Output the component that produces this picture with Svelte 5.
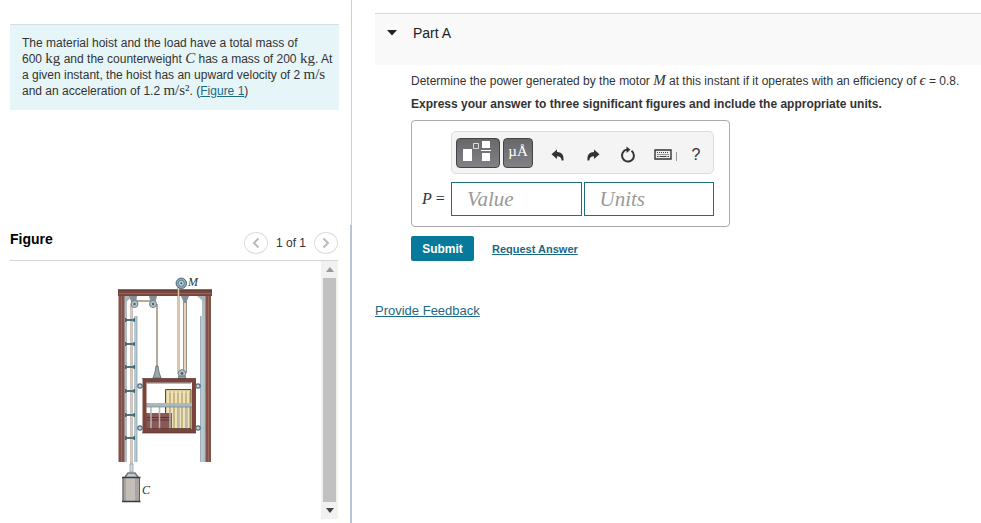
<script>
    let open = $state(true)
    let value = $state('')
    let units = $state('')

    const brackets = [320, 344, 367, 391, 415, 438]
    const rollers = [[140, 386], [198, 386], [140, 428], [198, 428]]
    const slats = [168, 172, 176, 180, 184, 188]
</script>

<div class="page">
    <aside>
        <div class="upper">
            <p class="problem">
                The material hoist and the load have a total mass of 600&nbsp;<span class="math">kg</span> and the counterweight <i class="math">C</i> has a mass of 200&nbsp;<span class="math">kg</span>. At a given instant, the hoist has an upward velocity of 2&nbsp;<span class="math">m/s</span> and an acceleration of 1.2&nbsp;<span class="math">m/s²</span>. (<a href="#figure">Figure 1</a>)
            </p>
        </div>
        <section class="lower" id="figure">
            <header>
                <h2>Figure</h2>
                <nav>
                    <button class="round" aria-label="Previous figure">
                        <svg width="8" height="12" viewBox="0 0 8 12"><path d="M6.5 1.5 2 6l4.5 4.5" /></svg>
                    </button>
                    <span>1 of 1</span>
                    <button class="round" aria-label="Next figure">
                        <svg width="8" height="12" viewBox="0 0 8 12"><path d="M1.5 1.5 6 6l-4.5 4.5" /></svg>
                    </button>
                </nav>
            </header>
            <div class="viewer">
                <svg class="hoist" width="110" height="240" viewBox="110 270 110 240" role="img" aria-label="Material hoist with motor M and counterweight C">
                    <!-- frame -->
                    <path d="M124 295h3v167h-3zM202 295h4v167h-4z" fill="#b3bcc2" />
                    <path d="M118.5 294h6v168h-6zM205.5 294h5.5v168h-5.5z" fill="#81514a" />
                    <path d="M121.5 296v166M208.5 296v166" stroke="#96695f" />
                    <path d="M118 289.5h94v6.5h-94z" fill="#7b463d" />
                    <path d="M118 290h94" stroke="#543630" />
                    <path d="M119 293.5h92" stroke="#986557" />
                    <path d="M125 296h8l-8 7zM205 296h-8l8 7z" fill="#a8b5bb" />
                    <!-- guide rails -->
                    <path d="M134 316h3v146h-3zM200.5 316h3v146h-3z" fill="#b4c9d2" />
                    <path d="M137 316v146M200.5 316v146" stroke="#879aa4" stroke-width=".7" />
                    <!-- ropes -->
                    <path d="M131.5 466V304M134 301h19M157 304v65M178.5 285v89" fill="none" stroke="#9b8777" stroke-width="2" />
                    <path d="M131.5 466V304M134 301h19M157 304v65M178.5 285v89" fill="none" stroke="#dccab0" />
                    <path d="M185 299v74" stroke="#8b7869" stroke-width="3.6" />
                    <path d="M185 299v74" stroke="#eadfcc" stroke-width="1.8" />
                    {#each brackets as y}
                        <rect x="125" y={y - 1} width="10" height="2" fill="#4b7585" />
                        <rect x="125" y={y - 2} width="1.5" height="4" fill="#3f6573" />
                        <rect x="133.5" y={y - 2} width="1.5" height="4" fill="#3f6573" />
                    {/each}
                    <!-- pulleys -->
                    <path d="M129 296h8l-1 8h-4zM149 296h8l-2 8h-4zM181 296h8l-3 7h-2z" fill="#829097" />
                    <g fill="#b5c1c5" stroke="#71828a">
                        <circle cx="134.5" cy="304" r="3.5" />
                        <circle cx="153" cy="304" r="3.5" />
                        <circle cx="182" cy="373.5" r="3.8" />
                    </g>
                    <g fill="#4e626c">
                        <circle cx="134.5" cy="304" r="1.2" />
                        <circle cx="153" cy="304" r="1.2" />
                        <circle cx="182" cy="373.5" r="1.4" />
                    </g>
                    <circle cx="181.3" cy="283.3" r="5.2" fill="#8fafc0" stroke="#476477" />
                    <circle cx="181.3" cy="283.3" r="3" fill="#c5d6df" stroke="#587c90" />
                    <circle cx="181.3" cy="283.3" r="1" fill="#344b58" />
                    <path d="M156 366h2l1 6 2 6h-8l2-6zM179 376l-1 3h8l-1-3z" fill="#9aa7ac" stroke="#59676d" stroke-width=".8" />
                    <!-- load -->
                    <path d="M165.5 389.5H191V429h-25.5z" fill="#d9c994" stroke="#5c4b36" />
                    {#each slats as x}
                        <path d="M{x} 391v37" stroke="#f4eac3" stroke-width="1.5" />
                        <path d="M{x + 2} 393v35" stroke="#a18d5e" stroke-width=".6" />
                    {/each}
                    <path d="M146 413h26v16h-26z" fill="#8c5856" />
                    <path d="M147 417.5h24M147 420h24" stroke="#463139" stroke-width=".9" />
                    <path d="M151 406v23M159.5 406v23M170 406v23M179 406v23M187 406v23" stroke="#b7b8b5" stroke-width="1.5" />
                    <path d="M146 403h46v4h-46z" fill="#abb8bc" />
                    <path d="M146 407h46" stroke="#68777e" stroke-width=".6" />
                    <!-- cage -->
                    <path d="M144.5 380.5H194V431h-49.5z" fill="none" stroke="#7a443c" stroke-width="4" />
                    <path d="M142 378.5h54M142 433h54M147 383h44M147 428.5h44" stroke="#513630" stroke-width=".7" />
                    {#each rollers as [cx, cy]}
                        <circle {cx} {cy} r="2.2" fill="#c5d5dc" stroke="#526c78" stroke-width="1.2" />
                    {/each}
                    <!-- counterweight -->
                    <path d="M130 464h3v8h-3z" fill="#d7dddf" stroke="#76858b" stroke-width=".6" />
                    <path d="M125 477l3-4h7l3 4" fill="#c3cacc" stroke="#6d777b" stroke-width="1.5" />
                    <path d="M122.5 477H140v25h-17.5z" fill="#aaa5a1" />
                    <path d="M126 478h9v23h-9z" fill="#c4beb9" />
                    <path d="M123 477v25M139.5 477v25" stroke="#5e5d5d" />
                    <path d="M122 477.5h18.5M122 501.5h18.5" stroke="#393a3b" stroke-width="1.6" />
                    <text x="188" y="286">M</text>
                    <text x="142" y="494">C</text>
                </svg>
                <div class="scrollbar">
                    <button aria-label="Scroll up"><svg width="8" height="5" viewBox="0 0 8 5"><path d="M0 5l4-5 4 5z" fill="#999" /></svg></button>
                    <div class="thumb"></div>
                    <button aria-label="Scroll down"><svg width="8" height="5" viewBox="0 0 8 5"><path d="M0 0l4 5 4-5z" fill="#444" /></svg></button>
                </div>
            </div>
        </section>
    </aside>

    <main>
        <div class="part">
            <button aria-expanded={open} onclick={() => (open = !open)}>
                <svg width="10" height="6" viewBox="0 0 10 6"><path d="M0 0h10L5 5.5z" fill="#222" /></svg>
                <span>Part A</span>
            </button>
        </div>
        {#if open}
            <div class="body">
                <p>Determine the power generated by the motor <i class="math">M</i> at this instant if it operates with an efficiency of <i class="math">ϵ</i> = 0.8.</p>
                <p><b>Express your answer to three significant figures and include the appropriate units.</b></p>
                <form onsubmit={(e) => e.preventDefault()}>
                    <div class="answer">
                        <div class="toolbar">
                            <button type="button" class="dark wide" aria-label="Templates">
                                <svg width="42" height="28" viewBox="0 0 42 28">
                                    <path d="M6 10h9v12H6zM25 2h8v7h-8zM25 14h8v8h-8zM24 11h10v1H24z" fill="#fff" />
                                    <path d="M16.5 4.5h5v5h-5z" fill="none" stroke="#ddd" />
                                </svg>
                            </button>
                            <button type="button" class="dark" aria-label="Symbols">µÅ</button>
                            <button type="button" class="tool" aria-label="Undo">
                                <svg width="14" height="14" viewBox="0 0 14 14"><path d="M.5 6.3 6 1.5v2.6c4.5.1 7 2.5 6.5 8.4h-1.8C10.3 9.3 8.8 8.2 6 8.2v2.9z" fill="#333" /></svg>
                            </button>
                            <button type="button" class="tool" aria-label="Redo">
                                <svg width="14" height="14" viewBox="0 0 14 14"><path d="M13.5 6.3 8 1.5v2.6c-4.5.1-7 2.5-6.5 8.4h1.8C3.7 9.3 5.2 8.2 8 8.2v2.9z" fill="#333" /></svg>
                            </button>
                            <button type="button" class="tool" aria-label="Reset">
                                <svg width="16" height="18" viewBox="0 0 16 18"><path d="M11.5 4.7A6 6 0 1 1 7 3.6" fill="none" stroke="#333" stroke-width="2" /><path d="M6.5.5l4 3.3-4 3.2z" fill="#333" /></svg>
                            </button>
                            <button type="button" class="tool" aria-label="Keyboard shortcuts">
                                <svg width="18" height="11" viewBox="0 0 18 11">
                                    <path d="M1 1h16v9H1z" fill="#eee" stroke="#333" stroke-width="1.4" />
                                    <path d="M3 3.5h12M3.5 5.5h12" stroke="#444" stroke-dasharray="1 1" />
                                    <path d="M3 7.5h1.5M5.5 7.5h7M13.5 7.5H15" stroke="#444" />
                                </svg>
                            </button>
                            <span class="bar"></span>
                            <button type="button" class="tool help" aria-label="Help">?</button>
                        </div>
                        <div class="fields">
                            <label for="value"><i>P</i> =</label>
                            <input id="value" placeholder="Value" bind:value />
                            <input aria-label="Units" placeholder="Units" bind:value={units} />
                        </div>
                    </div>
                    <div class="actions">
                        <button class="submit">Submit</button>
                        <a href="#answer">Request Answer</a>
                    </div>
                </form>
            </div>
        {/if}
        <a class="feedback" href="#feedback">Provide Feedback</a>
    </main>
</div>

<style>
    :global(body) {
        margin: 0;
        background: #fff;
    }
    .page {
        display: flex;
        min-height: 100vh;
        font-family: "Liberation Sans", Arial, sans-serif;
        font-size: 12px;
        color: #333;
    }
    p, h2 {
        margin: 0;
    }
    a {
        color: #1a6a85;
    }
    button {
        padding: 0;
        border: 0;
        background: none;
        color: inherit;
        font: inherit;
        cursor: pointer;
    }
    svg {
        display: block;
    }
    .math {
        font-family: "Liberation Serif", serif;
        font-size: 15px;
        line-height: 1;
    }

    aside {
        display: flex;
        flex-direction: column;
        flex: 0 0 352px;
    }
    .upper {
        box-sizing: border-box;
        min-height: 225px;
        padding: 24px 12px 0 10px;
        border-right: 1px solid #c8d0d6;
    }
    .problem {
        padding: 11px 2px 11px 12px;
        border-top: 1px solid #d5dfe0;
        background: #e6f5f7;
        line-height: 15px;
    }
    .lower {
        flex: 1;
        padding: 0 12px 4px 10px;
        border-right: 2px solid #bcc3d6;
    }
    .lower header {
        display: flex;
        align-items: center;
        justify-content: space-between;
        height: 35px;
        border-bottom: 1px solid #d5d5d5;
    }
    h2 {
        padding-bottom: 8px;
        font-size: 14px;
        color: #000;
    }
    nav {
        display: flex;
        align-items: center;
        gap: 8px;
    }
    .round {
        display: grid;
        place-items: center;
        box-sizing: border-box;
        width: 24px;
        height: 22px;
        border: 1px solid #ddd;
        border-radius: 50%;
    }
    .round path {
        fill: none;
        stroke: #bbb;
        stroke-width: 2;
    }
    .viewer {
        display: flex;
        justify-content: space-between;
        height: 258px;
    }
    .hoist {
        margin: 9px 0 0 100px;
    }
    .hoist text {
        font: italic 12px "Liberation Serif", serif;
        fill: #333;
    }
    .scrollbar {
        display: flex;
        flex-direction: column;
        width: 17px;
        background: #f1f1f1;
    }
    .scrollbar button {
        display: grid;
        place-items: center;
        height: 17px;
    }
    .thumb {
        flex: 1;
        margin: 0 2px;
        background: #c1c1c1;
    }

    main {
        flex: 1;
        padding: 13px 0 0 23px;
    }
    .part {
        box-sizing: border-box;
        height: 52px;
        padding: 10px 12px;
        border-top: 1px solid #d8d8d8;
        background: #f9f9f9;
    }
    .part button {
        display: flex;
        align-items: center;
        gap: 16px;
        font-size: 14px;
        line-height: 18px;
        color: #222;
    }
    .body {
        padding: 6px 0 0 36px;
    }
    .body p {
        line-height: 20px;
        margin-bottom: 3px;
    }
    .answer {
        box-sizing: border-box;
        max-width: 319px;
        margin-top: 6px;
        padding: 10px 15px;
        border: 1px solid #aaa;
        border-radius: 4px;
    }
    .toolbar {
        display: flex;
        align-items: center;
        box-sizing: border-box;
        height: 43px;
        margin-left: 24px;
        padding-left: 4px;
        border: 1px solid #ddd;
        border-radius: 5px;
        background: #f4f4f4;
    }
    .dark {
        box-sizing: border-box;
        flex: none;
        width: 30px;
        height: 30px;
        margin-right: 7px;
        padding-bottom: 2px;
        border: 1px solid #444;
        border-radius: 4px;
        background: linear-gradient(#68686b, #828286);
        color: #fff;
        font: 15px "Liberation Serif", serif;
    }
    .wide {
        width: 44px;
        margin-right: 3px;
        padding: 0;
    }
    .tool {
        display: grid;
        flex: none;
        place-items: center;
        width: 35px;
        height: 30px;
        padding-top: 4px;
    }
    .bar {
        flex: none;
        width: 1px;
        height: 9px;
        margin: 8px 0 0 -4px;
        background: #999;
    }
    .help {
        width: 38px;
        font-size: 16px;
    }
    .fields {
        display: flex;
        align-items: center;
        gap: 2px;
        margin-top: 8px;
    }
    label {
        flex: 0 0 27px;
        margin-left: -5px;
    }
    label, input {
        font-family: "Liberation Serif", serif;
        font-size: 16px;
    }
    input {
        box-sizing: border-box;
        flex: 1;
        min-width: 0;
        height: 34px;
        padding: 0 15px;
        border: 1px solid #1c6f7d;
        font-size: 21px;
        color: #333;
    }
    input::placeholder {
        color: #999;
        font-style: italic;
    }
    .actions {
        display: flex;
        align-items: center;
        gap: 18px;
        margin-top: 9px;
    }
    .submit {
        width: 63px;
        height: 25px;
        border-radius: 2px;
        background: #077a9b;
        color: #fff;
        font-weight: bold;
    }
    .actions a {
        font-size: 11px;
        font-weight: bold;
    }
    .feedback {
        display: inline-block;
        margin-top: 42px;
        font-size: 13px;
    }
</style>
